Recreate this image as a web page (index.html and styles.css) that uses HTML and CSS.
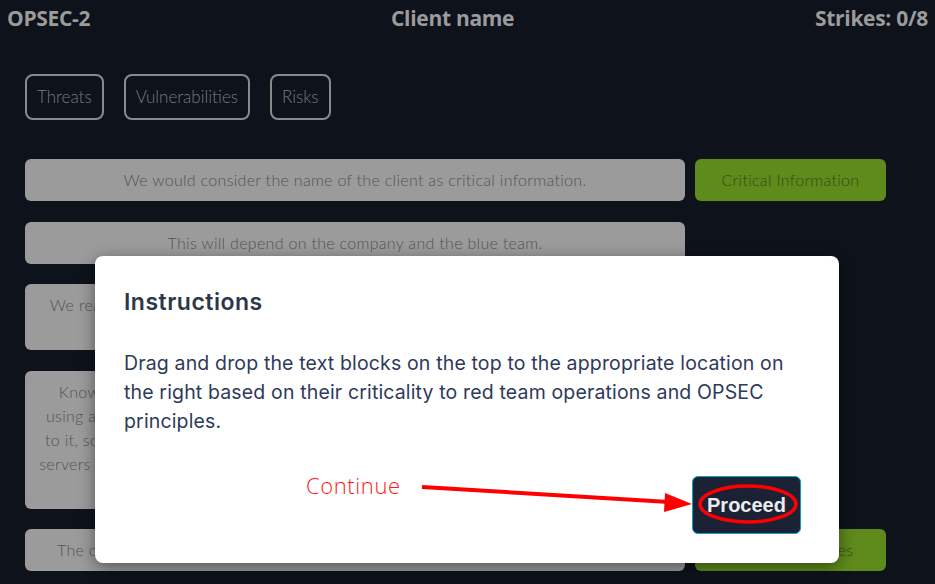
FILE: index.html
```html
<!DOCTYPE html>
<html lang="en">
<head>
	<meta charset="UTF-8">
	<title>OPSEC-2</title>
	<link rel="stylesheet" href="styles.css">
</head>
<body>

<header class="topbar">
	<span class="title">OPSEC-2</span>
	<span class="client">Client name</span>
	<span class="strikes">Strikes: 0/8</span>
</header>

<div class="categories">
	<div class="category">Threats</div>
	<div class="category">Vulnerabilities</div>
	<div class="category">Risks</div>
</div>

<div class="board">
	<div class="block">We would consider the name of the client as critical information.</div>
	<div class="drop filled">Critical Information</div>

	<div class="block">This will depend on the company and the blue team.</div>
	<div class="drop"></div>

	<div class="block">We realize that the blue team may already be monitoring for our activity and that this might lead to a change of plans.</div>
	<div class="drop"></div>

	<div class="block">Knowing that the blue team is watching all of the incoming traffic, we should avoid using any of our new infrastructure until we know exactly how the blue team will react to it, so we keep our new infrastructure hidden for a while longer and rely on the older servers that are already known to be safe. Any change to this plan has to be agreed with the whole red team before it is made.</div>
	<div class="drop"></div>

	<div class="block">The company's policies and procedures for handling the sensitive data of the client.</div>
	<div class="drop filled">Countermeasures</div>
</div>

<div class="modal">
	<h2>Instructions</h2>
	<p>Drag and drop the text blocks on the top to the appropriate location on the right based on their criticality to red team operations and OPSEC principles.</p>
	<div class="modal-footer">
		<button class="proceed">Proceed</button>
	</div>

	<span class="note">Continue</span>
	<svg class="annot" width="744" height="307" viewBox="0 0 744 307">
		<line x1="327" y1="231" x2="574" y2="246" stroke="#ff0000" stroke-width="4"/>
		<polygon points="570,237 597,248 569,256" fill="#ff0000"/>
		<ellipse cx="653" cy="248" rx="48" ry="18" fill="none" stroke="#ff0000" stroke-width="3.5"/>
	</svg>
</div>

</body>
</html>
```
FILE: styles.css
```css
body {
	margin: 0;
	background: #0e121b;
	font-family: 'Lato', sans-serif;
	height: 584px;
	overflow: hidden;
	position: relative;
}

.topbar {
	display: flex;
	justify-content: space-between;
	align-items: center;
	padding: 4px 7px 0;
	height: 28px;
	color: #9b9b9b;
	font-family: 'Open Sans', sans-serif;
	font-weight: 700;
	font-size: 21px;
	letter-spacing: -0.3px;
}

.categories {
	display: flex;
	gap: 20px;
	padding: 42px 25px 0;
}

.category {
	height: 42px;
	line-height: 42px;
	padding: 0 10px;
	border: 2px solid #8a8a8a;
	border-radius: 8px;
	color: #7a7a7a;
	font-weight: 300;
	font-size: 17px;
}

.board {
	display: grid;
	grid-template-columns: 660px 191px;
	column-gap: 10px;
	row-gap: 20.5px;
	padding: 39px 25px 0;
	align-items: start;
}

.block {
	background: #9b9b9b;
	border-radius: 6px;
	padding: 9px 14px;
	line-height: 24px;
	font-size: 16px;
	font-weight: 300;
	letter-spacing: 0.3px;
	color: #4f535a;
	text-align: center;
}

.drop {
	min-height: 42px;
}

.drop.filled {
	background: #5f8a1c;
	border-radius: 6px;
	padding: 9px 8px;
	line-height: 24px;
	font-size: 16px;
	font-weight: 300;
	letter-spacing: 0.3px;
	color: #344d12;
	text-align: center;
	box-sizing: border-box;
}

.modal {
	position: absolute;
	left: 95px;
	top: 256px;
	width: 744px;
	height: 307px;
	box-sizing: border-box;
	background: #fff;
	border-radius: 8px;
	box-shadow: 0 4px 16px rgba(0, 0, 0, 0.45);
	padding: 32px 29px 0;
	font-family: 'Inter', sans-serif;
	color: #2e3a59;
}

.modal h2 {
	margin: 0;
	font-size: 23px;
	font-weight: 600;
	letter-spacing: 0.5px;
	color: #2d3748;
	line-height: 28px;
}

.modal p {
	margin: 33px 0 0;
	max-width: 665px;
	font-size: 19.5px;
	line-height: 29px;
	letter-spacing: 0.15px;
}

.modal-footer {
	display: flex;
	justify-content: flex-end;
	padding: 40px 9px 0 0;
}

.proceed {
	width: 109px;
	height: 58px;
	background: #1b2236;
	border: 1px solid #0fa3b8;
	border-radius: 6px;
	color: #ececec;
	font-family: 'Liberation Sans', sans-serif;
	font-weight: 700;
	font-size: 20px;
	cursor: pointer;
}

.note {
	position: absolute;
	left: 211px;
	top: 214px;
	color: #ff1a1a;
	font-family: 'Open Sans', sans-serif;
	font-weight: 300;
	font-size: 22px;
	letter-spacing: 0.6px;
}

.annot {
	position: absolute;
	left: 0;
	top: 0;
	pointer-events: none;
}
```
